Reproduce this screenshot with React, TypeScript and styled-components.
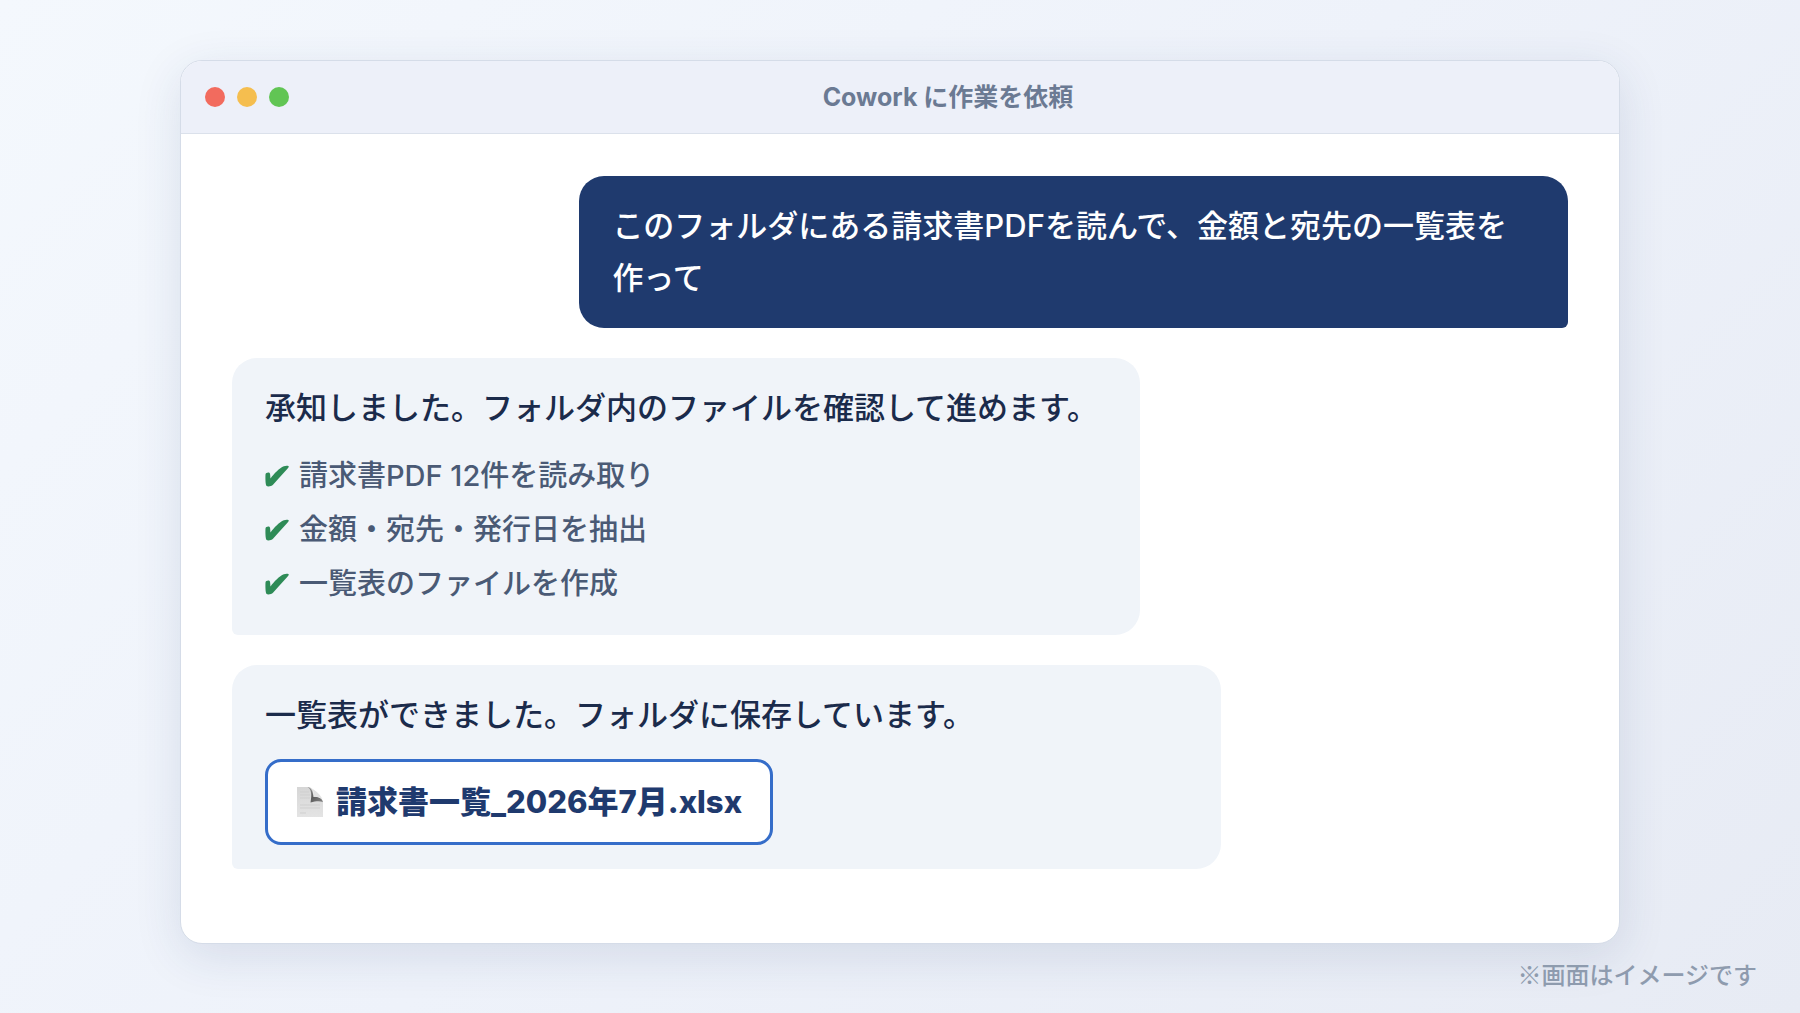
import React from 'react';
import styled, { createGlobalStyle } from 'styled-components';

const GlobalStyle = createGlobalStyle`
  *, *::before, *::after { box-sizing: border-box; }
  body {
    margin: 0;
    font-family: Inter, "Noto Sans CJK JP", sans-serif;
    font-weight: 500;
    color: #1b2b4b;
  }
`;

const Page = styled.div`
  display: flex;
  flex-direction: column;
  min-height: 100vh;
  padding-top: 60px;
  background: linear-gradient(135deg, #f4f8fd 0%, #eef2fa 50%, #e7ebf4 100%);
`;

const Window = styled.main`
  flex: 1;
  display: flex;
  flex-direction: column;
  width: 80%;
  margin: 0 auto;
  overflow: hidden;
  background: #ffffff;
  border: 1px solid #d5dce8;
  border-radius: 22px;
  box-shadow: 0 12px 48px rgba(31, 58, 110, 0.12);
`;

const TitleBar = styled.header`
  display: flex;
  align-items: center;
  gap: 12px;
  height: 73px;
  padding: 0 24px;
  background: #edf0f9;
  border-bottom: 1px solid #dbe1eb;
`;

const Dot = styled.span<{ $color: string }>`
  width: 20px;
  height: 20px;
  border-radius: 50%;
  background: ${(p) => p.$color};
`;

const Title = styled.h1`
  flex: 1;
  margin: 0;
  text-align: center;
  font-size: 25px;
  line-height: 40px;
  font-weight: 700;
  color: #6b7a93;
`;

const Thread = styled.section`
  display: flex;
  flex-direction: column;
  align-items: flex-start;
  gap: 30px;
  padding: 42px 51px;
`;

const Bubble = styled.article<{ $width: string; $mine?: boolean }>`
  width: ${(p) => p.$width};
  align-self: ${(p) => (p.$mine ? 'flex-end' : 'flex-start')};
  padding: 24px 33px;
  border-radius: ${(p) => (p.$mine ? '25px 25px 6px 25px' : '25px 25px 25px 6px')};
  background: ${(p) => (p.$mine ? '#1f3a6e' : '#f0f4f9')};
  color: ${(p) => (p.$mine ? '#ffffff' : '#1b2b4b')};
`;

const Message = styled.p`
  margin: 0;
  font-size: 31px;
  line-height: 52px;
`;

const Steps = styled.ul`
  margin: 15px 0 0;
  padding: 0;
  list-style: none;
`;

const Step = styled.li`
  display: flex;
  align-items: center;
  gap: 10px;
  font-size: 29px;
  line-height: 54px;
  color: #4a5a75;
`;

const FileLink = styled.a`
  display: inline-flex;
  align-items: center;
  gap: 12px;
  margin-top: 18px;
  padding: 14px 28px;
  border: 3px solid #356dc9;
  border-radius: 16px;
  background: #ffffff;
  color: #1f3a6e;
  font-size: 31px;
  line-height: 52px;
  font-weight: 800;
  text-decoration: none;
  vertical-align: top;
`;

const Note = styled.footer`
  padding: 13px 43px 22px;
  text-align: right;
  font-family: "Noto Sans CJK JP", sans-serif;
  font-size: 24px;
  line-height: 34px;
  color: #8e9bae;
`;

const CheckIcon = () => (
  <svg width="24" height="24" viewBox="0 -1 24 24" aria-hidden="true">
    <path
      d="M0.5 9.4C0.6 7.9 3.6 7 4.6 8.1C5.4 8.9 5.2 11.2 5.5 13.4C9.3 8.4 14.4 3 18.8 1.2C20.4 0.6 23.9 0.4 23.8 1.5C23.7 2.6 22 4.3 20.4 6C16 10.6 12 15.4 8 19.8C6.5 21.4 2.5 22.2 1.4 20.8C0.4 19.2 0.3 12.4 0.5 9.4Z"
      fill="#2e8b57"
    />
  </svg>
);

const FileIcon = () => (
  <svg width="28" height="30" viewBox="0 0 28 30" aria-hidden="true">
    <defs>
      <linearGradient id="sheet" x1="0" y1="0" x2="0" y2="1">
        <stop offset="0" stopColor="#d6d6d6" />
        <stop offset="1" stopColor="#e4e4e4" />
      </linearGradient>
      <linearGradient id="fold" x1="0" y1="0" x2="1" y2="1">
        <stop offset="0" stopColor="#a0a0a0" />
        <stop offset="0.5" stopColor="#5c5c5c" />
        <stop offset="1" stopColor="#858585" />
      </linearGradient>
    </defs>
    <path d="M1 0H13C17 1 17.5 4 18 9C22 9 26 11 27 15V30H1Z" fill="url(#sheet)" />
    <path d="M11.5 0C15 0.5 17 4 17.4 10C22 9.4 26 11 27 15C24 14 20 14 14.5 15.5C16 8 15.5 2 11.5 0Z" fill="url(#fold)" />
    <path d="M15.5 1.2C20 3.5 25 8.5 26.6 12.6C24 10.5 21.5 9.6 18.2 9.6C18 6 17.2 3 15.5 1.2Z" fill="#e2e2e2" />
    <path
      d="M4 5H13M4 8H14M4 11H14M4 18H24M4 21H24M4 26H10"
      stroke="#cfcfcf"
      strokeWidth="1"
      fill="none"
    />
  </svg>
);

const steps = ['請求書PDF 12件を読み取り', '金額・宛先・発行日を抽出', '一覧表のファイルを作成'];

export default function App() {
  return (
    <Page lang="ja">
      <GlobalStyle />
      <Window>
        <TitleBar>
          <Dot $color="#f26b5e" />
          <Dot $color="#f5be4f" />
          <Dot $color="#61c554" />
          <Title>Cowork に作業を依頼</Title>
        </TitleBar>
        <Thread>
          <Bubble $mine $width="74%">
            <Message>このフォルダにある請求書PDFを読んで、金額と宛先の一覧表を作って</Message>
          </Bubble>
          <Bubble $width="68%">
            <Message>承知しました。フォルダ内のファイルを確認して進めます。</Message>
            <Steps>
              {steps.map((step) => (
                <Step key={step}>
                  <CheckIcon />
                  {step}
                </Step>
              ))}
            </Steps>
          </Bubble>
          <Bubble $width="74%">
            <Message>一覧表ができました。フォルダに保存しています。</Message>
            <FileLink href="#file">
              <FileIcon />
              請求書一覧_2026年7月.xlsx
            </FileLink>
          </Bubble>
        </Thread>
      </Window>
      <Note>※画面はイメージです</Note>
    </Page>
  );
}
